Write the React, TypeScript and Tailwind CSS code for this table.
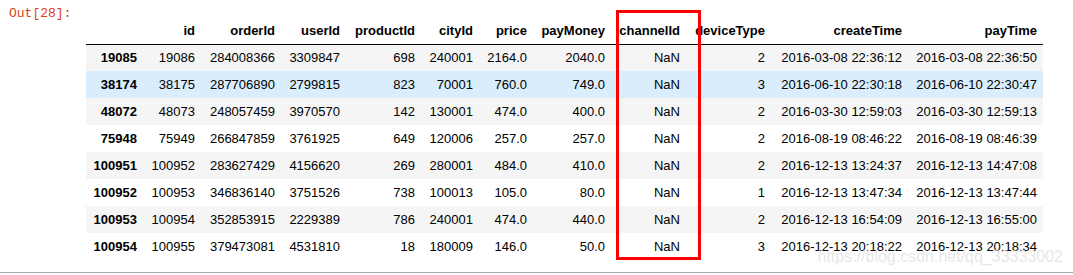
import React from "react";

const cols = [
  { name: "", w: 57 },
  { name: "id", w: 58 },
  { name: "orderId", w: 80 },
  { name: "userId", w: 65 },
  { name: "productId", w: 75 },
  { name: "cityId", w: 58 },
  { name: "price", w: 54 },
  { name: "payMoney", w: 78 },
  { name: "channelId", w: 75 },
  { name: "deviceType", w: 85 },
  { name: "createTime", w: 137 },
  { name: "payTime", w: 135 },
];

const rows: string[][] = [
  ["19085", "19086", "284008366", "3309847", "698", "240001", "2164.0", "2040.0", "NaN", "2", "2016-03-08 22:36:12", "2016-03-08 22:36:50"],
  ["38174", "38175", "287706890", "2799815", "823", "70001", "760.0", "749.0", "NaN", "3", "2016-06-10 22:30:18", "2016-06-10 22:30:47"],
  ["48072", "48073", "248057459", "3970570", "142", "130001", "474.0", "400.0", "NaN", "2", "2016-03-30 12:59:03", "2016-03-30 12:59:13"],
  ["75948", "75949", "266847859", "3761925", "649", "120006", "257.0", "257.0", "NaN", "2", "2016-08-19 08:46:22", "2016-08-19 08:46:39"],
  ["100951", "100952", "283627429", "4156620", "269", "280001", "484.0", "410.0", "NaN", "2", "2016-12-13 13:24:37", "2016-12-13 14:47:08"],
  ["100952", "100953", "346836140", "3751526", "738", "100013", "105.0", "80.0", "NaN", "1", "2016-12-13 13:47:34", "2016-12-13 13:47:44"],
  ["100953", "100954", "352853915", "2229389", "786", "240001", "474.0", "440.0", "NaN", "2", "2016-12-13 16:54:09", "2016-12-13 16:55:00"],
  ["100954", "100955", "379473081", "4531810", "18", "180009", "146.0", "50.0", "NaN", "3", "2016-12-13 20:18:22", "2016-12-13 20:18:34"],
];

const rowBg = (i: number) =>
  i === 1 ? "bg-[#d9edfd]" : i % 2 === 0 ? "bg-[#f5f5f5]" : "bg-white";

export default function App() {
  return (
    <div className="relative w-[1073px] h-[275px] bg-white overflow-hidden font-['Liberation_Sans',Arial,sans-serif] text-black">
      <div className="flex h-[272px]">
        <div className="w-[86px] shrink-0 pl-[9px] pt-[5px] font-['Liberation_Mono',monospace] text-[13px] leading-[17px] text-[#d84315]">
          Out[28]:
        </div>
        <div className="pt-[17px]">
          <table className="table-fixed border-collapse text-[13px] leading-[15px]">
            <colgroup>
              {cols.map((c, i) => (
                <col key={i} style={{ width: c.w }} />
              ))}
            </colgroup>
            <thead>
              <tr className="h-[27px] border-b border-black">
                {cols.map((c, i) => (
                  <th key={i} className="px-[6px] text-right font-bold align-middle whitespace-nowrap">
                    {c.name}
                  </th>
                ))}
              </tr>
            </thead>
            <tbody>
              {rows.map((r, i) => (
                <tr key={i} className={`h-[27px] ${rowBg(i)}`}>
                  {r.map((v, j) =>
                    j === 0 ? (
                      <th key={j} className="px-[6px] text-right font-bold align-middle whitespace-nowrap">
                        {v}
                      </th>
                    ) : (
                      <td key={j} className="px-[6px] text-right align-middle whitespace-nowrap">
                        {v}
                      </td>
                    )
                  )}
                </tr>
              ))}
            </tbody>
          </table>
        </div>
      </div>
      <div className="h-px bg-[#ababab] w-full"></div>
      <div className="absolute right-[10px] top-[247px] text-[16px] leading-[20px] text-[#dcdcdc]/70 whitespace-nowrap">
        https://blog.csdn.net/qq_33333002
      </div>
      <div className="absolute left-[616px] top-[10px] w-[85px] h-[250px] border-[3px] border-[#ff0000]"></div>
    </div>
  );
}
